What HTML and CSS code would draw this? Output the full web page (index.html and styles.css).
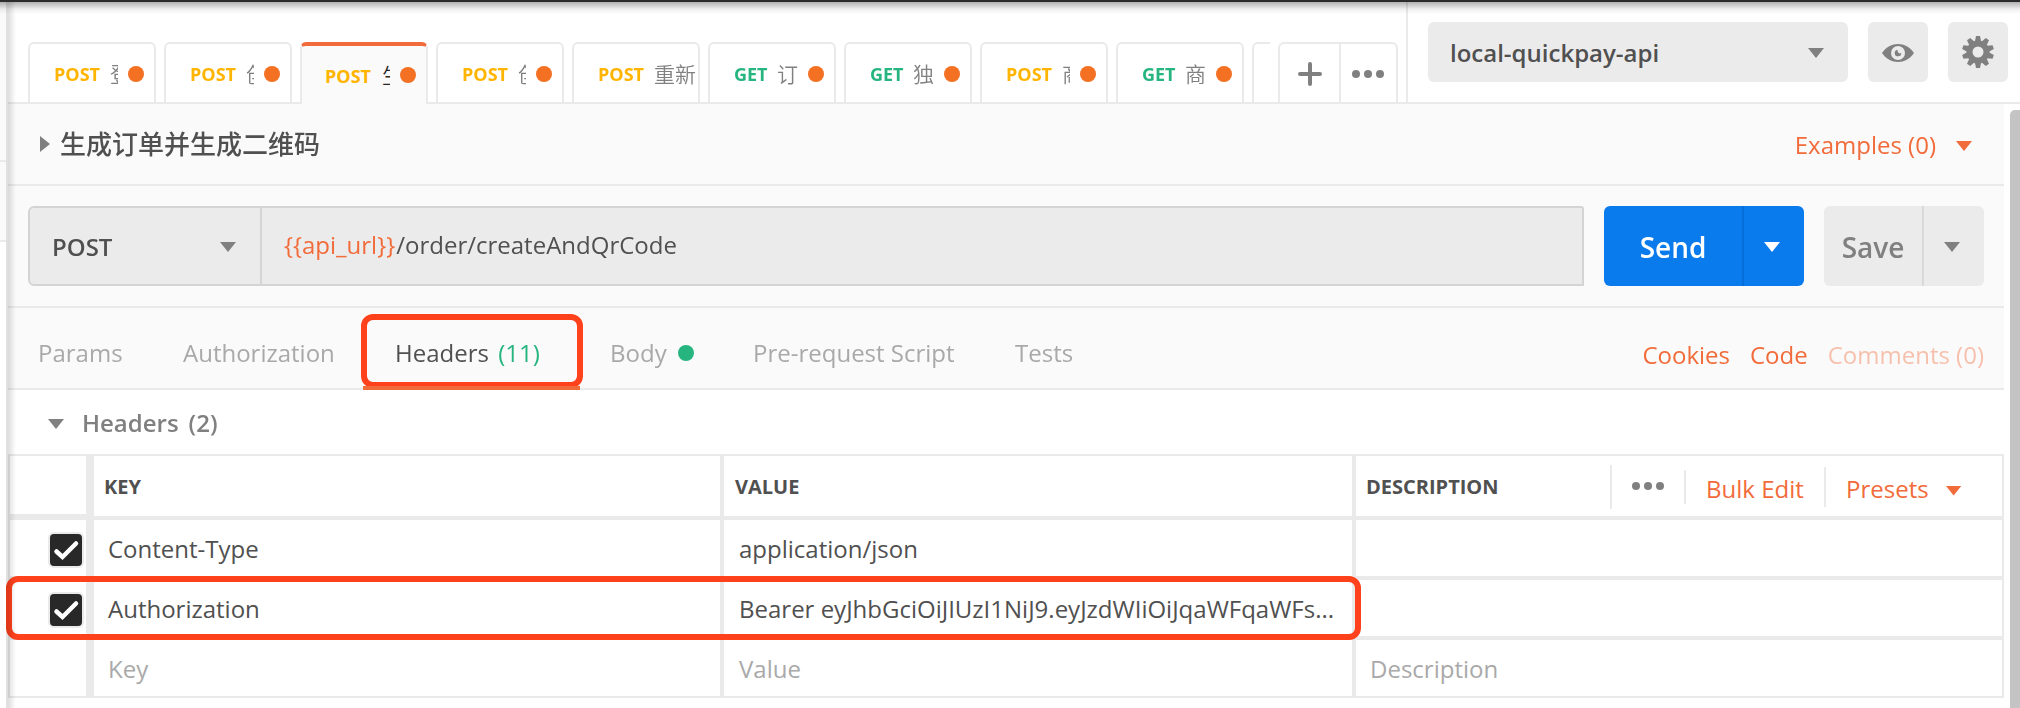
FILE: index.html
```html
<!DOCTYPE html>
<html lang="zh">
<head>
<meta charset="utf-8">
<title>local-quickpay-api</title>
<link rel="stylesheet" href="styles.css">
</head>
<body>
<div class="app">
  <aside class="sidebar"><div class="side-head"></div><div class="side-item"></div></aside>
  <main class="main">
    <header class="topbar">
      <div class="tabs">
        <div class="tab"><b class="post">POST</b><span class="name">登录</span><i class="dot"></i></div>
        <div class="tab"><b class="post">POST</b><span class="name">创建</span><i class="dot"></i></div>
        <div class="tab active"><b class="post">POST</b><span class="name">生成</span><i class="dot"></i></div>
        <div class="tab"><b class="post">POST</b><span class="name">创建</span><i class="dot"></i></div>
        <div class="tab"><b class="post">POST</b><span class="name wide">重新</span></div>
        <div class="tab"><b class="get">GET</b><span class="name">订单</span><i class="dot"></i></div>
        <div class="tab"><b class="get">GET</b><span class="name">独立</span><i class="dot"></i></div>
        <div class="tab"><b class="post">POST</b><span class="name">商户</span><i class="dot"></i></div>
        <div class="tab"><b class="get">GET</b><span class="name">商户</span><i class="dot"></i></div>
        <div class="tab"></div>
      </div>
      <div class="tab-actions">
        <div class="action"><svg width="24" height="24" viewBox="0 0 24 24"><path d="M12 2v20M2 12h20" stroke="#808080" stroke-width="4" stroke-linecap="round"/></svg></div>
        <div class="action"><svg width="32" height="8" viewBox="0 0 32 8" fill="#808080"><circle cx="4" cy="4" r="4"/><circle cx="16" cy="4" r="4"/><circle cx="28" cy="4" r="4"/></svg></div>
      </div>
      <div class="env">
        <div class="select"><span>local-quickpay-api</span><i class="caret"></i></div>
        <div class="icon-btn"><svg class="eye" width="32" height="18" viewBox="0 0 32 18"><path d="M0 9C4 3 10 0 16 0s12 3 16 9c-4 6-10 9-16 9S4 15 0 9z" fill="#808080"/><circle cx="16" cy="9" r="7" fill="#ebebeb"/><path d="M15.500 5.800a3.300 3.300 0 1 0 3.800 3.200c-1 .600-2 .500-2.800-.300s-1-2-1-2.900z" fill="#808080"/></svg></div>
        <div class="icon-btn"><svg width="32" height="32" viewBox="-16 -16 32 32"><g fill="#808080"><circle r="11.500"/><path id="tooth" d="M-3 -11L-2 -16H2L3 -11V11L2 16H-2L-3 11z"/><use href="#tooth" transform="rotate(36)"/><use href="#tooth" transform="rotate(72)"/><use href="#tooth" transform="rotate(108)"/><use href="#tooth" transform="rotate(144)"/></g><circle r="5.500" fill="#ebebeb"/></svg></div>
      </div>
    </header>
    <div class="body">
      <div class="content">
        <section class="title-row"><i class="caret-right"></i><h1>生成订单并生成二维码</h1><span class="examples">Examples (0)</span><i class="caret orange"></i></section>
        <section class="url-row">
          <div class="url-box"><div class="method"><span>POST</span><i class="caret"></i></div><div class="url"><em>{{api_url}}</em>/order/createAndQrCode</div></div>
          <div class="btn send"><span>Send</span><div class="drop"><i class="caret white"></i></div></div>
          <div class="btn save"><span>Save</span><div class="drop"><i class="caret"></i></div></div>
        </section>
        <nav class="req-tabs">
          <span class="rt params">Params</span><span class="rt auth">Authorization</span>
          <span class="rt headers">Headers <em>(11)</em></span>
          <span class="rt bodytab">Body<i class="green"></i></span><span class="rt pre">Pre-request Script</span><span class="rt">Tests</span>
          <div class="links"><span>Cookies</span><span>Code</span><span class="faded">Comments (0)</span></div>
        </nav>
        <div class="group"><i class="caret"></i><span class="g1">Headers</span><span>(2)</span></div>
        <div class="table">
          <div class="row head"><div class="cell check"></div><div class="cell">KEY</div><div class="cell">VALUE</div>
            <div class="cell desc"><span>DESCRIPTION</span><div class="tools"><div class="more"><svg width="32" height="8" viewBox="0 0 32 8" fill="#808080"><circle cx="4" cy="4" r="4"/><circle cx="16" cy="4" r="4"/><circle cx="28" cy="4" r="4"/></svg></div><div class="bulk">Bulk Edit</div><div class="presets">Presets<i class="caret orange"></i></div></div></div></div>
          <div class="row"><div class="cell check"><div class="box"><svg width="32" height="32" viewBox="0 0 32 32"><path d="M6.500 17.500l6 5.500L26 9.500" fill="none" stroke="#fff" stroke-width="4.500" stroke-linecap="round"/></svg></div></div><div class="cell">Content-Type</div><div class="cell">application/json</div><div class="cell"></div></div>
          <div class="row"><div class="cell check"><div class="box"><svg width="32" height="32" viewBox="0 0 32 32"><path d="M6.500 17.500l6 5.500L26 9.500" fill="none" stroke="#fff" stroke-width="4.500" stroke-linecap="round"/></svg></div></div><div class="cell">Authorization</div><div class="cell">Bearer eyJhbGciOiJIUzI1NiJ9.eyJzdWIiOiJqaWFqaWFs...</div><div class="cell"></div><div class="mark"></div></div>
          <div class="row last"><div class="cell check"></div><div class="cell">Key</div><div class="cell">Value</div><div class="cell">Description</div></div>
        </div>
      </div>
      <div class="scroll"><div class="thumb"></div></div>
    </div>
  </main>
  <div class="shade-left"></div>
  <div class="shade-top"></div>
</div>
</body>
</html>
```
FILE: styles.css
```css
* { box-sizing: border-box; }
body { margin: 0; background: #fff; color: #505050; font: 24px/34px "Open Sans", "Noto Sans CJK SC", sans-serif; }
em, i { font-style: normal; }
svg { display: block; }
.app { position: relative; isolation: isolate; width: 2020px; height: 708px; overflow: hidden; display: flex; border-top: 2px solid #2c2c2c; }
.sidebar { width: 8px; border-right: 2px solid #e0e0e0; flex: none; }
.side-head { height: 160px; background: #fafafa; border-bottom: 2px solid #eaeaea; }
.side-item { height: 80px; background: #fafafa; border-bottom: 2px solid #eaeaea; }
.main { flex: 1; min-width: 0; display: flex; flex-direction: column; }
.sidebar, .main { mix-blend-mode: multiply; }
.topbar { height: 102px; flex: none; display: flex; border-bottom: 2px solid #eaeaea; }
.tabs { width: 1262px; padding: 40px 0 0 20px; display: flex; gap: 8px; overflow: hidden; margin-bottom: -2px; flex: none; }
.tab { width: 128px; height: 60px; flex: none; border: 2px solid #eaeaea; border-bottom: 0; border-radius: 6px 6px 0 0; display: flex; align-items: center; padding: 2px 0 0 24px; }
.tab b { font-size: 18px; font-weight: 700; width: 56px; flex: none; margin-top: -1px; }
.tab b.get { width: 43px; }
.post { color: #ffb400; }
.get { color: #26b47f; }
.name { font-size: 21px; font-weight: 350; color: #808080; width: 8px; margin-right: 10px; white-space: nowrap; overflow: hidden; flex: none; }
.get + .name { width: 21px; }
.name.wide { width: 44px; margin: 0; }
.dot { width: 16px; height: 16px; border-radius: 50%; background: #f47023; flex: none; }
.tab.active { height: 62px; background: #fafafa; border-top: 4px solid #f26b3a; padding: 0 0 0 23px; }
.tab.active b { width: 57px; margin-top: 1px; }
.active .name { color: #282828; }
.tab-actions { width: 120px; height: 60px; margin: 40px 8px 0 8px; display: flex; border: 2px solid #eaeaea; border-bottom: 0; border-radius: 6px 6px 0 0; flex: none; }
.action { width: 60px; padding: 2px 0 0 2px; display: flex; align-items: center; justify-content: center; }
.action + .action { width: 58px; padding-left: 0; border-left: 2px solid #eaeaea; }
.env { flex: 1; border-left: 2px solid #eaeaea; padding: 20px 0 0 20px; display: flex; gap: 20px; }
.select { width: 420px; height: 60px; border-radius: 6px; background: #ebebeb; display: flex; align-items: center; justify-content: space-between; padding: 2px 24px 0 22px; font-weight: 600; }
.icon-btn { width: 60px; height: 60px; border-radius: 6px; background: #ebebeb; display: flex; align-items: center; justify-content: center; }
.eye { margin-top: 2px; }
.caret { width: 16px; height: 10px; background: #808080; clip-path: polygon(0 0, 100% 0, 50% 100%); flex: none; }
.caret.orange { background: #f26b3a; }
.caret.white { background: #fff; }
.caret-right { width: 10px; height: 16px; background: #808080; clip-path: polygon(0 0, 100% 50%, 0 100%); }
.body { flex: 1; display: flex; min-height: 0; }
.content { width: 1996px; }
.scroll { flex: 1; padding: 6px 0 0 6px; }
.thumb { height: 640px; background: #c4c4c4; border-radius: 5px 0 0 0; }
.title-row { height: 82px; background: #fafafa; border-bottom: 2px solid #eaeaea; display: flex; align-items: center; padding: 0 32px; }
h1 { margin: 0 auto 0 10px; font-size: 26px; font-weight: 500; }
.examples { color: #f26b3a; margin-right: 20px; padding-top: 2px; }
.title-row .orange { margin-top: 4px; }
.url-row { height: 122px; background: #fafafa; border-bottom: 2px solid #eaeaea; padding: 20px; display: flex; gap: 20px; }
.url-box { width: 1556px; height: 80px; border: 2px solid #d4d4d4; background: #ebebeb; border-radius: 6px 3px 0 6px; display: flex; }
.method { width: 232px; border-right: 2px solid #d4d4d4; padding: 2px 24px 0 22px; display: flex; justify-content: space-between; align-items: center; font-weight: 600; }
.url { padding: 20px 0 0 22px; }
.url em { margin-right: 1px; }
.url em, .links { color: #f26b3a; }
.btn { height: 80px; border-radius: 6px; display: flex; font-size: 28px; font-weight: 600; line-height: 82px; }
.btn > span { flex: 1; text-align: center; }
.drop { width: 62px; border-left: 2px solid; padding: 2px 4px 0 0; display: flex; align-items: center; justify-content: center; }
.send { width: 200px; background: #097bed; color: #fff; }
.send .drop { border-color: #066edb; }
.save { width: 160px; background: #ebebeb; color: #808080; }
.save .drop { border-color: #d9d9d9; }
.req-tabs { height: 82px; background: #fafafa; border-bottom: 2px solid #eaeaea; display: flex; padding: 28px 20px 0 30px; color: #a9a9a9; }
.rt { white-space: nowrap; }
.params { width: 145px; }
.auth { width: 178px; }
.headers { width: 222px; height: 74px; margin-top: -22px; padding: 16px 0 0 28px; border: 6px solid #ff411c; border-radius: 12px; color: #505050; position: relative; z-index: 0; }
.headers::after { content: ""; position: absolute; left: -4px; right: -3px; bottom: -8px; height: 8px; background: #f26b3a; z-index: -1; clip-path: inset(4px 0 0 0); }
.headers em { color: #26b47f; margin-left: 3px; }
.bodytab { display: flex; align-items: center; height: 34px; gap: 11px; width: 143px; margin-left: 27px; }
.green { width: 16px; height: 16px; border-radius: 50%; background: #26b47f; }
.pre { width: 262px; }
.links { margin-left: auto; padding-top: 2px; display: flex; gap: 20px; }
.faded { opacity: .4; }
.group { height: 64px; display: flex; align-items: center; padding: 2px 0 0 40px; font-weight: 600; color: #808080; }
.group .caret { margin-top: 2px; }
.group .g1 { margin: 0 10px 0 18px; }
.table { border: 2px solid #eaeaea; }
.row { display: grid; grid-template-columns: 76px 630px 628px 1fr; column-gap: 4px; background: #eaeaea; height: 60px; padding-bottom: 4px; position: relative; }
.cell { background: #fff; padding: 2px 15px 0; display: flex; align-items: center; min-width: 0; white-space: nowrap; }
.cell:nth-child(2) { margin-left: 4px; padding-left: 14px; }
.cell:nth-child(4) { padding-left: 14px; }
.cell.check { padding: 4px 0 0 38px; }
.row.head { height: 64px; font-size: 20px; font-weight: 700; }
.head .cell { padding-left: 11px; padding-right: 0; }
.head .cell:nth-child(2), .head .desc { padding-left: 10px; }
.head .check { margin-bottom: 2px; }
.box { width: 36px; height: 36px; border: 2px solid #eaeaea; border-radius: 6px; background: #282828; flex: none; }
.last { height: 56px; padding-bottom: 0; color: #a9a9a9; }
.desc { justify-content: space-between; }
.tools { display: flex; align-items: center; font-size: 24px; font-weight: 400; color: #f26b3a; }
.more { height: 44px; border-left: 2px solid #eaeaea; padding: 17px 20px 0; width: 74px; }
.bulk { height: 34px; line-height: 38px; border-left: 2px solid #eaeaea; padding-left: 20px; width: 140px; }
.presets { height: 40px; line-height: 40px; border-left: 2px solid #eaeaea; padding: 4px 0 0 20px; width: 178px; display: flex; align-items: center; gap: 17px; }
.presets .caret { margin-top: 3px; }
.mark { position: absolute; left: -4px; top: -4px; width: 1355px; height: 64px; border: 6px solid #ff411c; border-radius: 12px; }
.shade-left { position: absolute; left: 8px; top: 0; width: 8px; bottom: 0; background: linear-gradient(90deg, rgba(0,0,0,.13), rgba(0,0,0,0)); z-index: -1; }
.shade-top { position: absolute; left: 0; right: 0; top: 0; height: 12px; background: linear-gradient(rgba(0,0,0,.3), rgba(0,0,0,.06) 60%, rgba(0,0,0,0)); }
```
